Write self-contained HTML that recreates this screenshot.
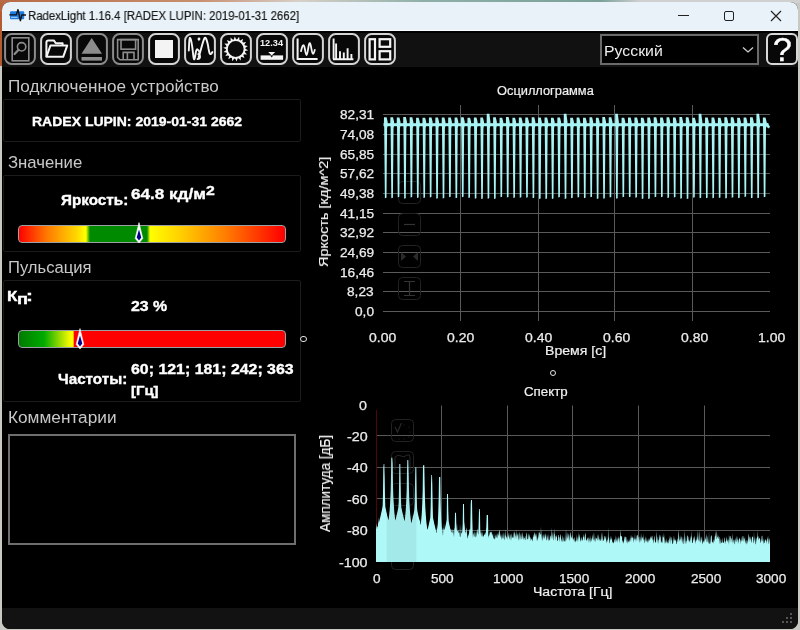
<!DOCTYPE html>
<html><head><meta charset="utf-8"><style>
html,body{margin:0;padding:0;width:800px;height:630px;overflow:hidden;background:#cfcfcf}
.a{position:absolute;box-sizing:border-box}
svg.a{will-change:transform}
.t{position:absolute;white-space:nowrap;font-family:"Liberation Sans", sans-serif;will-change:transform}
#win{position:absolute;left:2px;top:2px;width:796px;height:627px;background:#000;border-radius:8px;overflow:hidden}
#tb{position:absolute;left:0;top:0;width:796px;height:29px;background:#e8f2f8}
.box{border:1px solid #1c1c1c;border-radius:2px}
.bar{border:1.6px solid #9aa0a4;border-radius:4px}
</style></head><body>
<div style="position:absolute;left:0;top:0;width:800px;height:630px;background:#c9c9c4"></div><div style="position:absolute;left:0;top:0;width:2px;height:66px;background:#b45a30"></div><div style="position:absolute;left:0;top:0;width:12px;height:12px;background:#b8643a"></div><div style="position:absolute;left:0;top:0;width:800px;height:3px;background:linear-gradient(90deg,#b86a45 0,#c89070 200px,#d8d0c8 300px,#8fb0a8 420px,#7aa098 600px,#d0d0d0 640px)"></div>
<div id="win">
<div id="tb"></div>
<div class="a" style="left:0;top:28px;width:796px;height:1px;background:#fafdff"></div>
<div class="a" style="left:0;top:31px;width:796px;height:34px;background:#111"></div>
<svg class="a" style="left:7px;top:7px" width="18" height="14" viewBox="0 0 18 14"><rect x="1" y="2.2" width="14.2" height="8" rx="1" fill="#1e7be0"/><path d="M0.3,5.8 H7.4 L9,0.3 L11.4,12 L12.8,6 H17" fill="none" stroke="#111" stroke-width="1.3"/><path d="M2,8.3 H8.5" stroke="#bfe0ff" stroke-width="0.9"/></svg>
<div class="a" style="left:676px;top:13px;width:11px;height:1px;background:#222"></div>
<div class="a" style="left:722px;top:9px;width:10px;height:10px;border:1.3px solid #222;border-radius:2px"></div>
<svg class="a" style="left:768px;top:8px" width="12" height="12" viewBox="0 0 12 12"><path d="M1,1 L11,11 M11,1 L1,11" stroke="#222" stroke-width="1.2"/></svg>
<div class="a" style="left:0;top:606px;width:796px;height:21px;background:#121212"></div>
<svg class="a" style="left:780px;top:611px" width="12" height="12"><g fill="#555"><rect x="8" y="0" width="2" height="2"/><rect x="4" y="4" width="2" height="2"/><rect x="8" y="4" width="2" height="2"/><rect x="0" y="8" width="2" height="2"/><rect x="4" y="8" width="2" height="2"/><rect x="8" y="8" width="2" height="2"/></g></svg>
</div>
<div class="a" style="left:600px;top:34px;width:159px;height:31px;border:2px solid #6a6a6a;background:#000"></div>
<svg class="a" style="left:742px;top:46px" width="12" height="8"><path d="M1,1.5 L6,6 L11,1.5" fill="none" stroke="#cfcfcf" stroke-width="1.3"/></svg>
<div class="a" style="left:766px;top:33px;width:32px;height:32px;border:2px solid #d8d8d8;border-radius:6px;background:#080808"></div>
<svg class="a" style="left:4px;top:33px" width="32" height="32" viewBox="0 0 32 32"><rect x="1.1" y="1.1" width="29.8" height="29.8" rx="6.5" fill="#080808" stroke="#8c8c8c" stroke-width="2.0"/><rect x="8.2" y="4.8" width="16.6" height="23" fill="none" stroke="#8c8c8c" stroke-width="1.6"/><circle cx="17.6" cy="13.8" r="4.2" fill="none" stroke="#8c8c8c" stroke-width="1.6"/><path d="M14.6,16.8 L10.6,21" stroke="#8c8c8c" stroke-width="2.2" stroke-linecap="round"/></svg>
<svg class="a" style="left:40px;top:33px" width="32" height="32" viewBox="0 0 32 32"><rect x="1.1" y="1.1" width="29.8" height="29.8" rx="6.5" fill="#080808" stroke="#d4d4d4" stroke-width="2.0"/><path d="M6.4,23.8 V9.6 Q6.4,7.6 8.4,7.6 H14 L15.8,10.2 H22.6 V12.2" fill="none" stroke="#f4f4f4" stroke-width="2" stroke-linejoin="round"/><path d="M10.4,12.6 H27.2 L23.2,23.8 H6.4 Z" fill="none" stroke="#f4f4f4" stroke-width="2" stroke-linejoin="round"/></svg>
<svg class="a" style="left:76px;top:33px" width="32" height="32" viewBox="0 0 32 32"><rect x="1.1" y="1.1" width="29.8" height="29.8" rx="6.5" fill="#080808" stroke="#8c8c8c" stroke-width="2.0"/><path d="M15.7,4.9 L26,20.8 H5.5 Z" fill="#8c8c8c"/><rect x="5.5" y="24" width="20.5" height="3.6" fill="#8c8c8c"/></svg>
<svg class="a" style="left:112px;top:33px" width="32" height="32" viewBox="0 0 32 32"><rect x="1.1" y="1.1" width="29.8" height="29.8" rx="6.5" fill="#080808" stroke="#8c8c8c" stroke-width="2.0"/><path d="M5.6,6.6 H26.2 V26.8 H8 L5.6,24.4 Z" fill="none" stroke="#8c8c8c" stroke-width="1.6"/><rect x="9" y="6.6" width="14.6" height="9.6" fill="none" stroke="#8c8c8c" stroke-width="1.6"/><path d="M11.2,26.8 V19.4 H22 V26.8 M15.4,19.4 V26.8" fill="none" stroke="#8c8c8c" stroke-width="1.6"/></svg>
<svg class="a" style="left:148px;top:33px" width="32" height="32" viewBox="0 0 32 32"><rect x="1.1" y="1.1" width="29.8" height="29.8" rx="6.5" fill="#080808" stroke="#d4d4d4" stroke-width="2.0"/><rect x="7" y="7" width="18" height="18" fill="#f4f4f4"/></svg>
<svg class="a" style="left:184px;top:33px" width="32" height="32" viewBox="0 0 32 32"><rect x="1.1" y="1.1" width="29.8" height="29.8" rx="6.5" fill="#080808" stroke="#d4d4d4" stroke-width="2.0"/><path d="M4.8,17.5 C5.2,9 5.4,4 6.2,5 C7.2,6 8.4,14 9.2,22 C9.8,28 10.4,27 11,24 C11.8,19 12.4,15.5 13.6,16.5 C15.6,18 16.2,20 14.6,21 C16.8,22 16.6,26 13.6,26 M14.8,6 v0.5" fill="none" stroke="#f4f4f4" stroke-width="1.9" stroke-linecap="round"/><path d="M14.6,24 C16.5,19 18.8,8 20.6,5 C22,3.4 23.8,10 24.6,16 C25.4,21 26.2,23 28.4,19" fill="none" stroke="#f4f4f4" stroke-width="1.9" stroke-linecap="round"/><circle cx="15" cy="6" r="1.4" fill="#f4f4f4"/></svg>
<svg class="a" style="left:220px;top:33px" width="32" height="32" viewBox="0 0 32 32"><rect x="1.1" y="1.1" width="29.8" height="29.8" rx="6.5" fill="#080808" stroke="#d4d4d4" stroke-width="2.0"/><path d="M24.68,15.41 L28.24,17.26 L24.38,18.36 Z M24.34,18.52 L27.05,21.47 L23.05,21.19 Z M22.96,21.32 L24.50,25.02 L20.83,23.39 Z M20.70,23.48 L20.88,27.49 L17.99,24.70 Z M17.84,24.74 L16.64,28.57 L14.88,24.96 Z M14.72,24.95 L12.28,28.13 L11.86,24.14 Z M11.72,24.07 L8.34,26.23 L9.31,22.34 Z M9.20,22.23 L5.29,23.10 L7.53,19.77 Z M7.46,19.63 L3.49,19.11 L6.73,16.75 Z M6.72,16.59 L3.16,14.74 L7.02,13.64 Z M7.06,13.48 L4.35,10.53 L8.35,10.81 Z M8.44,10.68 L6.90,6.98 L10.57,8.61 Z M10.70,8.52 L10.52,4.51 L13.41,7.30 Z M13.56,7.26 L14.76,3.43 L16.52,7.04 Z M16.68,7.05 L19.12,3.87 L19.54,7.86 Z M19.68,7.93 L23.06,5.77 L22.09,9.66 Z M22.20,9.77 L26.11,8.90 L23.87,12.23 Z M23.94,12.37 L27.91,12.89 L24.67,15.25 Z" fill="#f4f4f4"/><circle cx="15.7" cy="16" r="8.9" fill="#0b0b0b" stroke="#f4f4f4" stroke-width="1.9"/></svg>
<svg class="a" style="left:256px;top:33px" width="32" height="32" viewBox="0 0 32 32"><rect x="1.1" y="1.1" width="29.8" height="29.8" rx="6.5" fill="#080808" stroke="#d4d4d4" stroke-width="2.0"/><text x="15.5" y="12.9" text-anchor="middle" font-family='"Liberation Sans", sans-serif' font-weight="bold" font-size="9.6" fill="#f4f4f4" textLength="23" lengthAdjust="spacingAndGlyphs">12.34</text><path d="M12.2,18.9 H19.2 L15.7,22.4 Z" fill="#f4f4f4"/><rect x="4.6" y="22.4" width="22.5" height="4.4" fill="#f4f4f4"/><path d="M14.2,22.4 H17.2 L15.7,24.6 Z" fill="#0b0b0b"/></svg>
<svg class="a" style="left:292px;top:33px" width="32" height="32" viewBox="0 0 32 32"><rect x="1.1" y="1.1" width="29.8" height="29.8" rx="6.5" fill="#080808" stroke="#d4d4d4" stroke-width="2.0"/><path d="M5.6,5.6 V26 H25.6" fill="none" stroke="#f4f4f4" stroke-width="2"/><path d="M9,18.2 C10,14 10.8,11.6 11.8,12.4 C13,13.6 13.4,22 14.6,22 C15.8,22 16.4,9.6 17.8,10.2 C19.2,10.8 19.6,20.8 21,20.8 C22,20.8 22.4,18 22.8,16.8" fill="none" stroke="#f4f4f4" stroke-width="1.8" stroke-linecap="round"/></svg>
<svg class="a" style="left:328px;top:33px" width="32" height="32" viewBox="0 0 32 32"><rect x="1.1" y="1.1" width="29.8" height="29.8" rx="6.5" fill="#080808" stroke="#d4d4d4" stroke-width="2.0"/><path d="M5.6,5.4 V26.2 M8.1,10.6 V26.2 M12,18.2 V26.2 M15.8,19.4 V26.2 M19.6,15.2 V26.2 M23.4,21 V26.2 M5,26.2 H25.4" fill="none" stroke="#f4f4f4" stroke-width="1.9"/></svg>
<svg class="a" style="left:364px;top:33px" width="32" height="32" viewBox="0 0 32 32"><rect x="1.1" y="1.1" width="29.8" height="29.8" rx="6.5" fill="#080808" stroke="#d4d4d4" stroke-width="2.0"/><rect x="5.6" y="6.2" width="5.4" height="20.2" fill="none" stroke="#f4f4f4" stroke-width="2.2"/><rect x="15.6" y="6.2" width="10.6" height="7.6" fill="none" stroke="#f4f4f4" stroke-width="2.2"/><rect x="15.6" y="18.2" width="10.6" height="8.2" fill="none" stroke="#f4f4f4" stroke-width="2.2"/></svg>
<div class="t" style="left:603.93px;top:43.00px;font-size:15.26px;line-height:15.26px;color:#eeeeee;font-weight:normal;transform-origin:0 0;transform:scaleX(1.0381);">Русский</div>
<div class="t" style="left:772.85px;top:33.00px;font-size:33.72px;line-height:33.72px;color:#ffffff;font-weight:normal;transform-origin:0 0;transform:scaleX(1.0009);-webkit-text-stroke:0.4px #fff;">?</div>
<div class="t" style="left:27.89px;top:9.00px;font-size:13.37px;line-height:13.37px;color:#1a1a1a;font-weight:normal;transform-origin:0 0;transform:scaleX(0.8530);-webkit-text-stroke:0.2px #1a1a1a;">RadexLight 1.16.4 [RADEX LUPIN: 2019-01-31 2662]</div>
<div class="t" style="left:7.63px;top:78.00px;font-size:16.28px;line-height:16.28px;color:#c8c8c8;font-weight:normal;transform-origin:0 0;transform:scaleX(1.0523);">Подключенное устройство</div>
<div class="a box" style="left:3px;top:99px;width:298px;height:43px"></div>
<div class="t" style="left:32.09px;top:115.00px;font-size:13.66px;line-height:13.66px;color:#fff;font-weight:bold;transform-origin:0 0;transform:scaleX(1.0248);-webkit-text-stroke:0.35px #fff;">RADEX LUPIN: 2019-01-31 2662</div>
<div class="t" style="left:8.25px;top:155.00px;font-size:15.99px;line-height:15.99px;color:#c8c8c8;font-weight:normal;transform-origin:0 0;transform:scaleX(1.0482);">Значение</div>
<div class="a box" style="left:3px;top:175px;width:298px;height:77px"></div>
<div class="t" style="left:60.57px;top:194.00px;font-size:13.95px;line-height:13.95px;color:#fff;font-weight:bold;transform-origin:0 0;transform:scaleX(1.0950);-webkit-text-stroke:0.35px #fff;">Яркость:</div>
<div class="t" style="left:131.30px;top:187.00px;font-size:14.68px;line-height:14.68px;color:#fff;font-weight:bold;transform-origin:0 0;transform:scaleX(1.1662);-webkit-text-stroke:0.35px #fff;">64.8 кд/м</div>
<div class="t" style="left:205.78px;top:185.00px;font-size:12.94px;line-height:12.94px;color:#fff;font-weight:bold;transform-origin:0 0;transform:scaleX(1.2227);-webkit-text-stroke:0.35px #fff;">2</div>
<div class="a bar" style="left:18px;top:225px;width:268px;height:18px;background:linear-gradient(90deg,#ff0000 0px,#ff7a00 28px,#ffd800 58px,#ffff00 66px,#ffff00 67px,#008a00 71px,#008a00 128px,#ffff00 131px,#ffd200 160px,#ff8000 205px,#ff0000 265px)"></div>
<svg class="a" style="left:133.3px;top:222px" width="12" height="22" viewBox="0 0 12 22"><path d="M6,0.6 L9.8,16.4 L6,20.9 L2.2,16.4 Z" fill="#fff" stroke="#fff" stroke-width="0.6" stroke-linejoin="round"/><path d="M6,7.6 L8.3,15.6 L6,18.6 L3.7,15.6 Z" fill="#00008a"/></svg>
<div class="t" style="left:8.07px;top:259.00px;font-size:16.13px;line-height:16.13px;color:#c8c8c8;font-weight:normal;transform-origin:0 0;transform:scaleX(1.0303);">Пульсация</div>
<div class="a box" style="left:3px;top:280px;width:298px;height:122px"></div>
<div class="t" style="left:7.14px;top:289.00px;font-size:14.68px;line-height:14.68px;color:#fff;font-weight:bold;transform-origin:0 0;transform:scaleX(1.1580);-webkit-text-stroke:0.35px #fff;">К</div>
<div class="t" style="left:16.81px;top:292.00px;font-size:14.39px;line-height:14.39px;color:#fff;font-weight:bold;transform-origin:0 0;transform:scaleX(1.2716);-webkit-text-stroke:0.35px #fff;">п</div>
<div class="t" style="left:26.13px;top:289.00px;font-size:14.39px;line-height:14.39px;color:#fff;font-weight:bold;transform-origin:0 0;transform:scaleX(1.4378);-webkit-text-stroke:0.35px #fff;">:</div>
<div class="t" style="left:131.12px;top:299.00px;font-size:14.53px;line-height:14.53px;color:#fff;font-weight:bold;transform-origin:0 0;transform:scaleX(1.0946);-webkit-text-stroke:0.35px #fff;">23 %</div>
<div class="a bar" style="left:18px;top:330px;width:268px;height:18px;background:linear-gradient(90deg,#007a00 0px,#00aa00 25px,#90d800 40px,#ffff00 52px,#ffff00 54px,#ff0000 55.5px,#ff0000 267px)"></div>
<svg class="a" style="left:73.6px;top:327.5px" width="12" height="22" viewBox="0 0 12 22"><path d="M6,0.6 L9.8,16.4 L6,20.9 L2.2,16.4 Z" fill="#fff" stroke="#fff" stroke-width="0.6" stroke-linejoin="round"/><path d="M6,7.6 L8.3,15.6 L6,18.6 L3.7,15.6 Z" fill="#00008a"/></svg>
<div class="a" style="left:300.4px;top:336.3px;width:6.2px;height:6.2px;border:1.4px solid #e4e4e4;border-radius:50%"></div>
<div class="t" style="left:58.14px;top:372.00px;font-size:14.53px;line-height:14.53px;color:#fff;font-weight:bold;transform-origin:0 0;transform:scaleX(1.0468);-webkit-text-stroke:0.35px #fff;">Частоты:</div>
<div class="t" style="left:130.69px;top:362.00px;font-size:14.24px;line-height:14.24px;color:#fff;font-weight:bold;transform-origin:0 0;transform:scaleX(1.1170);-webkit-text-stroke:0.35px #fff;">60; 121; 181; 242; 363</div>
<div class="t" style="left:131.18px;top:384.00px;font-size:13.66px;line-height:13.66px;color:#fff;font-weight:bold;transform-origin:0 0;transform:scaleX(1.0937);-webkit-text-stroke:0.35px #fff;">[Гц]</div>
<div class="t" style="left:7.52px;top:409.00px;font-size:16.42px;line-height:16.42px;color:#c8c8c8;font-weight:normal;transform-origin:0 0;transform:scaleX(1.0504);">Комментарии</div>
<div class="a" style="left:8px;top:434px;width:288px;height:111px;border:2px solid #6e6e6e"></div>
<div class="t" style="left:339.95px;top:109.00px;font-size:12.35px;line-height:12.35px;color:#ececec;font-weight:normal;transform-origin:0 0;transform:scaleX(1.1060);-webkit-text-stroke:0.25px #ececec">82,31</div>
<div class="t" style="left:339.89px;top:129.00px;font-size:12.35px;line-height:12.35px;color:#ececec;font-weight:normal;transform-origin:0 0;transform:scaleX(1.1060);-webkit-text-stroke:0.25px #ececec">74,08</div>
<div class="t" style="left:339.89px;top:149.00px;font-size:12.35px;line-height:12.35px;color:#ececec;font-weight:normal;transform-origin:0 0;transform:scaleX(1.1060);-webkit-text-stroke:0.25px #ececec">65,85</div>
<div class="t" style="left:339.95px;top:168.00px;font-size:12.35px;line-height:12.35px;color:#ececec;font-weight:normal;transform-origin:0 0;transform:scaleX(1.1060);-webkit-text-stroke:0.25px #ececec">57,62</div>
<div class="t" style="left:339.89px;top:188.00px;font-size:12.35px;line-height:12.35px;color:#ececec;font-weight:normal;transform-origin:0 0;transform:scaleX(1.1060);-webkit-text-stroke:0.25px #ececec">49,38</div>
<div class="t" style="left:339.89px;top:208.00px;font-size:12.35px;line-height:12.35px;color:#ececec;font-weight:normal;transform-origin:0 0;transform:scaleX(1.1060);-webkit-text-stroke:0.25px #ececec">41,15</div>
<div class="t" style="left:339.95px;top:227.00px;font-size:12.35px;line-height:12.35px;color:#ececec;font-weight:normal;transform-origin:0 0;transform:scaleX(1.1060);-webkit-text-stroke:0.25px #ececec">32,92</div>
<div class="t" style="left:339.95px;top:247.00px;font-size:12.35px;line-height:12.35px;color:#ececec;font-weight:normal;transform-origin:0 0;transform:scaleX(1.1060);-webkit-text-stroke:0.25px #ececec">24,69</div>
<div class="t" style="left:339.89px;top:267.00px;font-size:12.35px;line-height:12.35px;color:#ececec;font-weight:normal;transform-origin:0 0;transform:scaleX(1.1060);-webkit-text-stroke:0.25px #ececec">16,46</div>
<div class="t" style="left:347.47px;top:286.00px;font-size:12.35px;line-height:12.35px;color:#ececec;font-weight:normal;transform-origin:0 0;transform:scaleX(1.1060);-webkit-text-stroke:0.25px #ececec">8,23</div>
<div class="t" style="left:354.98px;top:306.00px;font-size:12.35px;line-height:12.35px;color:#ececec;font-weight:normal;transform-origin:0 0;transform:scaleX(1.1060);-webkit-text-stroke:0.25px #ececec">0,0</div>
<div class="t" style="left:369.21px;top:332.00px;font-size:12.06px;line-height:12.06px;color:#ececec;font-weight:normal;transform-origin:0 0;transform:scaleX(1.1583);-webkit-text-stroke:0.25px #ececec">0.00</div>
<div class="t" style="left:447.05px;top:332.00px;font-size:12.06px;line-height:12.06px;color:#ececec;font-weight:normal;transform-origin:0 0;transform:scaleX(1.1583);-webkit-text-stroke:0.25px #ececec">0.20</div>
<div class="t" style="left:524.89px;top:332.00px;font-size:12.06px;line-height:12.06px;color:#ececec;font-weight:normal;transform-origin:0 0;transform:scaleX(1.1583);-webkit-text-stroke:0.25px #ececec">0.40</div>
<div class="t" style="left:602.73px;top:332.00px;font-size:12.06px;line-height:12.06px;color:#ececec;font-weight:normal;transform-origin:0 0;transform:scaleX(1.1583);-webkit-text-stroke:0.25px #ececec">0.60</div>
<div class="t" style="left:680.57px;top:332.00px;font-size:12.06px;line-height:12.06px;color:#ececec;font-weight:normal;transform-origin:0 0;transform:scaleX(1.1583);-webkit-text-stroke:0.25px #ececec">0.80</div>
<div class="t" style="left:758.13px;top:332.00px;font-size:12.06px;line-height:12.06px;color:#ececec;font-weight:normal;transform-origin:0 0;transform:scaleX(1.1583);-webkit-text-stroke:0.25px #ececec">1.00</div>
<div class="t" style="left:496.92px;top:85.00px;font-size:12.50px;line-height:12.50px;color:#f0f0f0;font-weight:normal;transform-origin:0 0;transform:scaleX(1.0253);-webkit-text-stroke:0.2px #f0f0f0;">Осциллограмма</div>
<div class="t" style="left:545.27px;top:345.00px;font-size:12.65px;line-height:12.65px;color:#f0f0f0;font-weight:normal;transform-origin:0 0;transform:scaleX(1.1141);-webkit-text-stroke:0.2px #f0f0f0;">Время [с]</div>
<div class="a" style="left:549.8px;top:369.8px;width:6.2px;height:6.2px;border:1.4px solid #e4e4e4;border-radius:50%"></div>
<div class="t" style="left:316.90px;top:266.85px;font-size:13.23px;line-height:13.23px;color:#f0f0f0;transform-origin:0 0;-webkit-text-stroke:0.2px #f0f0f0;transform:rotate(-90deg) scaleX(1.0955)">Яркость [кд/м^2]</div>
<div class="t" style="left:319.31px;top:531.90px;font-size:13.81px;line-height:13.81px;color:#f0f0f0;transform-origin:0 0;-webkit-text-stroke:0.2px #f0f0f0;transform:rotate(-90deg) scaleX(0.9785)">Амплитуда [дБ]</div>
<div class="t" style="left:359.30px;top:400.00px;font-size:12.50px;line-height:12.50px;color:#ececec;font-weight:normal;transform-origin:0 0;transform:scaleX(1.1387);-webkit-text-stroke:0.25px #ececec">0</div>
<div class="t" style="left:346.63px;top:431.00px;font-size:12.50px;line-height:12.50px;color:#ececec;font-weight:normal;transform-origin:0 0;transform:scaleX(1.1387);-webkit-text-stroke:0.25px #ececec">-20</div>
<div class="t" style="left:346.63px;top:462.00px;font-size:12.50px;line-height:12.50px;color:#ececec;font-weight:normal;transform-origin:0 0;transform:scaleX(1.1387);-webkit-text-stroke:0.25px #ececec">-40</div>
<div class="t" style="left:346.63px;top:494.00px;font-size:12.50px;line-height:12.50px;color:#ececec;font-weight:normal;transform-origin:0 0;transform:scaleX(1.1387);-webkit-text-stroke:0.25px #ececec">-60</div>
<div class="t" style="left:346.63px;top:525.00px;font-size:12.50px;line-height:12.50px;color:#ececec;font-weight:normal;transform-origin:0 0;transform:scaleX(1.1387);-webkit-text-stroke:0.25px #ececec">-80</div>
<div class="t" style="left:338.73px;top:557.00px;font-size:12.50px;line-height:12.50px;color:#ececec;font-weight:normal;transform-origin:0 0;transform:scaleX(1.1387);-webkit-text-stroke:0.25px #ececec">-100</div>
<div class="t" style="left:373.03px;top:573.00px;font-size:12.50px;line-height:12.50px;color:#ececec;font-weight:normal;transform-origin:0 0;transform:scaleX(1.0875);-webkit-text-stroke:0.25px #ececec">0</div>
<div class="t" style="left:431.25px;top:573.00px;font-size:12.50px;line-height:12.50px;color:#ececec;font-weight:normal;transform-origin:0 0;transform:scaleX(1.0875);-webkit-text-stroke:0.25px #ececec">500</div>
<div class="t" style="left:493.01px;top:573.00px;font-size:12.50px;line-height:12.50px;color:#ececec;font-weight:normal;transform-origin:0 0;transform:scaleX(1.0875);-webkit-text-stroke:0.25px #ececec">1000</div>
<div class="t" style="left:558.81px;top:573.00px;font-size:12.50px;line-height:12.50px;color:#ececec;font-weight:normal;transform-origin:0 0;transform:scaleX(1.0875);-webkit-text-stroke:0.25px #ececec">1500</div>
<div class="t" style="left:624.78px;top:573.00px;font-size:12.50px;line-height:12.50px;color:#ececec;font-weight:normal;transform-origin:0 0;transform:scaleX(1.0875);-webkit-text-stroke:0.25px #ececec">2000</div>
<div class="t" style="left:690.58px;top:573.00px;font-size:12.50px;line-height:12.50px;color:#ececec;font-weight:normal;transform-origin:0 0;transform:scaleX(1.0875);-webkit-text-stroke:0.25px #ececec">2500</div>
<div class="t" style="left:756.48px;top:573.00px;font-size:12.50px;line-height:12.50px;color:#ececec;font-weight:normal;transform-origin:0 0;transform:scaleX(1.0875);-webkit-text-stroke:0.25px #ececec">3000</div>
<div class="t" style="left:523.83px;top:386.00px;font-size:12.06px;line-height:12.06px;color:#f0f0f0;font-weight:normal;transform-origin:0 0;transform:scaleX(1.1044);-webkit-text-stroke:0.2px #f0f0f0;">Спектр</div>
<div class="t" style="left:532.70px;top:586.00px;font-size:12.50px;line-height:12.50px;color:#f0f0f0;font-weight:normal;transform-origin:0 0;transform:scaleX(1.1252);-webkit-text-stroke:0.2px #f0f0f0;">Частота [Гц]</div>
<svg class="a" style="left:0;top:0" width="800" height="630"><line x1="383" y1="114.5" x2="770" y2="114.5" stroke="#5a5a5a" stroke-width="1"/><line x1="383" y1="134.5" x2="770" y2="134.5" stroke="#5a5a5a" stroke-width="1"/><line x1="383" y1="154.5" x2="770" y2="154.5" stroke="#5a5a5a" stroke-width="1"/><line x1="383" y1="173.5" x2="770" y2="173.5" stroke="#5a5a5a" stroke-width="1"/><line x1="383" y1="193.5" x2="770" y2="193.5" stroke="#5a5a5a" stroke-width="1"/><line x1="383" y1="213.5" x2="770" y2="213.5" stroke="#5a5a5a" stroke-width="1"/><line x1="383" y1="232.5" x2="770" y2="232.5" stroke="#5a5a5a" stroke-width="1"/><line x1="383" y1="252.5" x2="770" y2="252.5" stroke="#5a5a5a" stroke-width="1"/><line x1="383" y1="272.5" x2="770" y2="272.5" stroke="#5a5a5a" stroke-width="1"/><line x1="383" y1="291.5" x2="770" y2="291.5" stroke="#5a5a5a" stroke-width="1"/><line x1="383" y1="311.5" x2="770" y2="311.5" stroke="#5a5a5a" stroke-width="1"/><line x1="460.5" y1="105" x2="460.5" y2="321" stroke="#5a5a5a" stroke-width="1"/><line x1="538.5" y1="105" x2="538.5" y2="321" stroke="#5a5a5a" stroke-width="1"/><line x1="614.5" y1="105" x2="614.5" y2="321" stroke="#5a5a5a" stroke-width="1"/><line x1="692.5" y1="105" x2="692.5" y2="321" stroke="#5a5a5a" stroke-width="1"/><rect x="398.5" y="181.5" width="22" height="22" rx="4" fill="none" stroke="#222" stroke-width="1"/><rect x="398.5" y="213.5" width="22" height="22" rx="4" fill="none" stroke="#222" stroke-width="1"/><line x1="404" y1="224.5" x2="415" y2="224.5" stroke="#333" stroke-width="1.2"/><rect x="398.5" y="245.5" width="22" height="22" rx="4" fill="none" stroke="#222" stroke-width="1"/><path d="M401,252 L406,256.5 L401,261 Z M418,252 L413,256.5 L418,261 Z" fill="#2a2a2a"/><rect x="398.5" y="277.5" width="22" height="22" rx="4" fill="none" stroke="#222" stroke-width="1"/><path d="M404,281.5 H415 M409.5,281.5 V295.5 M404,295.5 H415" stroke="#333" stroke-width="1.2" fill="none"/><path d="M384.20,128 L383.90,123 L384.00,117.19 L386.60,117.19 L387.70,122 L387.60,126 L387.10,128 L386.50,197.69 L384.90,198.19 Z M390.62,128 L390.32,123 L390.42,117.30 L393.02,117.30 L394.12,122 L394.02,126 L393.52,128 L392.92,197.81 L391.32,198.31 Z M397.04,128 L396.74,123 L396.84,117.50 L399.44,117.50 L400.54,122 L400.44,126 L399.94,128 L399.34,196.73 L397.74,197.23 Z M403.47,128 L403.17,123 L403.27,117.01 L405.87,117.01 L406.97,122 L406.87,126 L406.37,128 L405.77,198.27 L404.17,198.77 Z M409.89,128 L409.59,123 L409.69,117.21 L412.29,117.21 L413.39,122 L413.29,126 L412.79,128 L412.19,197.07 L410.59,197.57 Z M416.31,128 L416.01,123 L416.11,117.80 L418.71,117.80 L419.81,122 L419.71,126 L419.21,128 L418.61,197.54 L417.01,198.04 Z M422.73,128 L422.43,123 L422.53,117.67 L425.13,117.67 L426.23,122 L426.13,126 L425.63,128 L425.03,197.55 L423.43,198.05 Z M429.15,128 L428.85,123 L428.95,117.51 L431.55,117.51 L432.65,122 L432.55,126 L432.05,128 L431.45,196.90 L429.85,197.40 Z M435.58,128 L435.28,123 L435.38,117.51 L437.98,117.51 L439.08,122 L438.98,126 L438.48,128 L437.88,198.34 L436.28,198.84 Z M442.00,128 L441.70,123 L441.80,117.42 L444.40,117.42 L445.50,122 L445.40,126 L444.90,128 L444.30,198.08 L442.70,198.58 Z M448.42,128 L448.12,123 L448.22,117.54 L450.82,117.54 L451.92,122 L451.82,126 L451.32,128 L450.72,196.73 L449.12,197.23 Z M454.84,128 L454.54,123 L454.64,117.61 L457.24,117.61 L458.34,122 L458.24,126 L457.74,128 L457.14,197.78 L455.54,198.28 Z M461.26,128 L460.96,123 L461.06,117.24 L463.66,117.24 L464.76,122 L464.66,126 L464.16,128 L463.56,196.66 L461.96,197.16 Z M467.69,128 L467.39,123 L467.49,117.69 L470.09,117.69 L471.19,122 L471.09,126 L470.59,128 L469.99,197.55 L468.39,198.05 Z M474.11,128 L473.81,123 L473.91,117.58 L476.51,117.58 L477.61,122 L477.51,126 L477.01,128 L476.41,198.36 L474.81,198.86 Z M480.53,128 L480.23,123 L480.33,117.57 L482.93,117.57 L484.03,122 L483.93,126 L483.43,128 L482.83,198.44 L481.23,198.94 Z M486.95,128 L486.65,123 L486.75,113.80 L489.35,113.80 L490.45,122 L490.35,126 L489.85,128 L489.25,198.20 L487.65,198.70 Z M493.37,128 L493.07,123 L493.17,117.36 L495.77,117.36 L496.87,122 L496.77,126 L496.27,128 L495.67,198.47 L494.07,198.97 Z M499.80,128 L499.50,123 L499.60,117.70 L502.20,117.70 L503.30,122 L503.20,126 L502.70,128 L502.10,196.79 L500.50,197.29 Z M506.22,128 L505.92,123 L506.02,117.11 L508.62,117.11 L509.72,122 L509.62,126 L509.12,128 L508.52,197.03 L506.92,197.53 Z M512.64,128 L512.34,123 L512.44,117.77 L515.04,117.77 L516.14,122 L516.04,126 L515.54,128 L514.94,197.47 L513.34,197.97 Z M519.06,128 L518.76,123 L518.86,117.50 L521.46,117.50 L522.56,122 L522.46,126 L521.96,128 L521.36,197.20 L519.76,197.70 Z M525.48,128 L525.18,123 L525.28,117.41 L527.88,117.41 L528.98,122 L528.88,126 L528.38,128 L527.78,197.37 L526.18,197.87 Z M531.91,128 L531.61,123 L531.71,117.28 L534.31,117.28 L535.41,122 L535.31,126 L534.81,128 L534.21,197.77 L532.61,198.27 Z M538.33,128 L538.03,123 L538.13,117.47 L540.73,117.47 L541.83,122 L541.73,126 L541.23,128 L540.63,198.41 L539.03,198.91 Z M544.75,128 L544.45,123 L544.55,117.55 L547.15,117.55 L548.25,122 L548.15,126 L547.65,128 L547.05,198.46 L545.45,198.96 Z M551.17,128 L550.87,123 L550.97,117.69 L553.57,117.69 L554.67,122 L554.57,126 L554.07,128 L553.47,198.58 L551.87,199.08 Z M557.59,128 L557.29,123 L557.39,117.54 L559.99,117.54 L561.09,122 L560.99,126 L560.49,128 L559.89,196.93 L558.29,197.43 Z M564.02,128 L563.72,123 L563.82,113.80 L566.42,113.80 L567.52,122 L567.42,126 L566.92,128 L566.32,198.53 L564.72,199.03 Z M570.44,128 L570.14,123 L570.24,117.72 L572.84,117.72 L573.94,122 L573.84,126 L573.34,128 L572.74,197.74 L571.14,198.24 Z M576.86,128 L576.56,123 L576.66,117.57 L579.26,117.57 L580.36,122 L580.26,126 L579.76,128 L579.16,197.02 L577.56,197.52 Z M583.28,128 L582.98,123 L583.08,117.67 L585.68,117.67 L586.78,122 L586.68,126 L586.18,128 L585.58,197.75 L583.98,198.25 Z M589.71,128 L589.41,123 L589.51,117.23 L592.11,117.23 L593.21,122 L593.11,126 L592.61,128 L592.01,196.73 L590.41,197.23 Z M596.13,128 L595.83,123 L595.93,117.68 L598.53,117.68 L599.63,122 L599.53,126 L599.03,128 L598.43,198.58 L596.83,199.08 Z M602.55,128 L602.25,123 L602.35,117.07 L604.95,117.07 L606.05,122 L605.95,126 L605.45,128 L604.85,198.20 L603.25,198.70 Z M608.97,128 L608.67,123 L608.77,117.33 L611.37,117.33 L612.47,122 L612.37,126 L611.87,128 L611.27,196.90 L609.67,197.40 Z M615.39,128 L615.09,123 L615.19,113.80 L617.79,113.80 L618.89,122 L618.79,126 L618.29,128 L617.69,198.14 L616.09,198.64 Z M621.82,128 L621.52,123 L621.62,117.70 L624.22,117.70 L625.32,122 L625.22,126 L624.72,128 L624.12,196.69 L622.52,197.19 Z M628.24,128 L627.94,123 L628.04,117.49 L630.64,117.49 L631.74,122 L631.64,126 L631.14,128 L630.54,196.69 L628.94,197.19 Z M634.66,128 L634.36,123 L634.46,117.57 L637.06,117.57 L638.16,122 L638.06,126 L637.56,128 L636.96,197.26 L635.36,197.76 Z M641.08,128 L640.78,123 L640.88,117.70 L643.48,117.70 L644.58,122 L644.48,126 L643.98,128 L643.38,198.56 L641.78,199.06 Z M647.50,128 L647.20,123 L647.30,117.40 L649.90,117.40 L651.00,122 L650.90,126 L650.40,128 L649.80,198.60 L648.20,199.10 Z M653.93,128 L653.63,123 L653.73,117.25 L656.33,117.25 L657.43,122 L657.33,126 L656.83,128 L656.23,196.75 L654.63,197.25 Z M660.35,128 L660.05,123 L660.15,117.48 L662.75,117.48 L663.85,122 L663.75,126 L663.25,128 L662.65,196.66 L661.05,197.16 Z M666.77,128 L666.47,123 L666.57,117.16 L669.17,117.16 L670.27,122 L670.17,126 L669.67,128 L669.07,197.42 L667.47,197.92 Z M673.19,128 L672.89,123 L672.99,117.49 L675.59,117.49 L676.69,122 L676.59,126 L676.09,128 L675.49,196.91 L673.89,197.41 Z M679.61,128 L679.31,123 L679.41,117.03 L682.01,117.03 L683.11,122 L683.01,126 L682.51,128 L681.91,198.34 L680.31,198.84 Z M686.04,128 L685.74,123 L685.84,117.25 L688.44,117.25 L689.54,122 L689.44,126 L688.94,128 L688.34,198.52 L686.74,199.02 Z M692.46,128 L692.16,123 L692.26,117.72 L694.86,117.72 L695.96,122 L695.86,126 L695.36,128 L694.76,197.36 L693.16,197.86 Z M698.88,128 L698.58,123 L698.68,113.80 L701.28,113.80 L702.38,122 L702.28,126 L701.78,128 L701.18,197.64 L699.58,198.14 Z M705.30,128 L705.00,123 L705.10,117.52 L707.70,117.52 L708.80,122 L708.70,126 L708.20,128 L707.60,197.79 L706.00,198.29 Z M711.72,128 L711.42,123 L711.52,117.45 L714.12,117.45 L715.22,122 L715.12,126 L714.62,128 L714.02,197.84 L712.42,198.34 Z M718.15,128 L717.85,123 L717.95,117.75 L720.55,117.75 L721.65,122 L721.55,126 L721.05,128 L720.45,197.61 L718.85,198.11 Z M724.57,128 L724.27,123 L724.37,117.34 L726.97,117.34 L728.07,122 L727.97,126 L727.47,128 L726.87,198.04 L725.27,198.54 Z M730.99,128 L730.69,123 L730.79,117.19 L733.39,117.19 L734.49,122 L734.39,126 L733.89,128 L733.29,197.20 L731.69,197.70 Z M737.41,128 L737.11,123 L737.21,117.78 L739.81,117.78 L740.91,122 L740.81,126 L740.31,128 L739.71,197.64 L738.11,198.14 Z M743.83,128 L743.53,123 L743.63,117.44 L746.23,117.44 L747.33,122 L747.23,126 L746.73,128 L746.13,196.62 L744.53,197.12 Z M750.26,128 L749.96,123 L750.06,117.33 L752.66,117.33 L753.76,122 L753.66,126 L753.16,128 L752.56,197.76 L750.96,198.26 Z M756.68,128 L756.38,123 L756.48,113.80 L759.08,113.80 L760.18,122 L760.08,126 L759.58,128 L758.98,197.83 L757.38,198.33 Z M763.10,128 L762.80,123 L762.90,117.51 L765.50,117.51 L766.60,122 L766.50,126 L766.00,128 L765.40,196.72 L763.80,197.22 Z" fill="#a8f4f4"/><rect x="383.5" y="123.2" width="385" height="3" fill="#a8f4f4"/><path d="M766.5,122 L770,126.5 L769,128.5 L766.5,127 Z" fill="#a8f4f4"/><line x1="376" y1="435.5" x2="770" y2="435.5" stroke="#5a5a5a" stroke-width="1"/><line x1="376" y1="467.5" x2="770" y2="467.5" stroke="#5a5a5a" stroke-width="1"/><line x1="376" y1="498.5" x2="770" y2="498.5" stroke="#5a5a5a" stroke-width="1"/><line x1="376" y1="530.5" x2="770" y2="530.5" stroke="#5a5a5a" stroke-width="1"/><line x1="441.5" y1="405.5" x2="441.5" y2="562" stroke="#5a5a5a" stroke-width="1"/><line x1="507.5" y1="405.5" x2="507.5" y2="562" stroke="#5a5a5a" stroke-width="1"/><line x1="572.5" y1="405.5" x2="572.5" y2="562" stroke="#5a5a5a" stroke-width="1"/><line x1="638.5" y1="405.5" x2="638.5" y2="562" stroke="#5a5a5a" stroke-width="1"/><line x1="704.5" y1="405.5" x2="704.5" y2="562" stroke="#5a5a5a" stroke-width="1"/><line x1="376.5" y1="410" x2="376.5" y2="562" stroke="#500606" stroke-width="1"/><rect x="391.5" y="419.5" width="22" height="22" rx="4" fill="none" stroke="#242424" stroke-width="1"/><rect x="391.5" y="451.5" width="22" height="22" rx="4" fill="none" stroke="#242424" stroke-width="1"/><rect x="391.5" y="483.5" width="22" height="22" rx="4" fill="none" stroke="#242424" stroke-width="1"/><rect x="391.5" y="515.5" width="22" height="22" rx="4" fill="none" stroke="#242424" stroke-width="1"/><rect x="391.5" y="547.5" width="22" height="22" rx="4" fill="none" stroke="#242424" stroke-width="1"/><path d="M395,427 L397.5,432 L401.5,423" stroke="#2c2c2c" stroke-width="1.2" fill="none"/><circle cx="404" cy="425" r="0.6" fill="#2a2a2a"/><circle cx="409" cy="427" r="0.6" fill="#2a2a2a"/><circle cx="410" cy="432" r="0.6" fill="#2a2a2a"/><circle cx="409" cy="437" r="0.6" fill="#2a2a2a"/><circle cx="404" cy="439" r="0.6" fill="#2a2a2a"/><circle cx="399" cy="439" r="0.6" fill="#2a2a2a"/><path d="M395,470 V457 Q398,454 401,456 Q404,458 407,455 Q410,454 410,457 V470" stroke="#2a2a2a" stroke-width="1" fill="none"/><path d="M376,562 L376,519 L376.0,527.8 L376.3,523.2 L376.7,527.3 L377.0,529.4 L377.3,526.1 L377.7,527.0 L378.0,525.8 L378.3,517.1 L378.7,523.0 L379.0,522.1 L379.3,520.9 L379.7,519.6 L380.0,518.2 L380.3,516.9 L380.7,515.5 L381.0,514.1 L381.3,512.6 L381.7,511.1 L382.0,509.6 L382.3,507.9 L382.7,505.3 L383.0,492.5 L383.3,467.7 L383.7,464.1 L384.0,464.1 L384.3,464.1 L384.7,477.4 L385.0,496.9 L385.3,506.7 L385.7,508.4 L386.0,510.0 L386.3,511.6 L386.7,513.0 L387.0,514.5 L387.3,515.9 L387.7,517.3 L388.0,518.6 L388.3,519.9 L388.7,519.3 L389.0,516.6 L389.3,513.4 L389.7,509.6 L390.0,505.0 L390.3,499.0 L390.7,490.5 L391.0,475.6 L391.3,457.8 L391.7,457.8 L392.0,457.8 L392.3,457.8 L392.7,463.2 L393.0,485.4 L393.3,495.8 L393.7,502.6 L394.0,507.8 L394.3,511.9 L394.7,515.3 L395.0,518.2 L395.3,520.5 L395.7,519.2 L396.0,517.9 L396.3,516.5 L396.7,515.1 L397.0,513.7 L397.3,512.2 L397.7,510.7 L398.0,509.1 L398.3,507.4 L398.7,502.2 L399.0,487.4 L399.3,464.1 L399.7,464.1 L400.0,464.1 L400.3,464.1 L400.7,484.5 L401.0,500.6 L401.3,507.2 L401.7,508.9 L402.0,510.5 L402.3,512.0 L402.7,513.5 L403.0,514.9 L403.3,516.3 L403.7,517.7 L404.0,519.0 L404.3,520.3 L404.7,520.9 L405.0,518.1 L405.3,514.7 L405.7,510.7 L406.0,505.8 L406.3,499.2 L406.7,489.5 L407.0,470.5 L407.3,460.1 L407.7,460.1 L408.0,460.1 L408.3,460.1 L408.7,474.7 L409.0,491.3 L409.3,500.3 L409.7,506.6 L410.0,511.4 L410.3,515.3 L410.7,518.5 L411.0,521.3 L411.3,523.3 L411.7,521.9 L412.0,520.6 L412.3,519.2 L412.7,517.8 L413.0,516.4 L413.3,514.9 L413.7,513.4 L414.0,511.8 L414.3,510.1 L414.7,501.9 L415.0,484.2 L415.3,467.2 L415.7,467.2 L416.0,467.2 L416.3,467.2 L416.7,493.3 L417.0,507.0 L417.3,510.8 L417.7,512.5 L418.0,514.0 L418.3,515.6 L418.7,517.0 L419.0,518.5 L419.3,519.8 L419.7,521.2 L420.0,518.4 L420.3,523.8 L420.7,525.1 L421.0,522.4 L421.3,518.9 L421.7,514.6 L422.0,509.3 L422.3,502.1 L422.7,490.8 L423.0,465.3 L423.3,465.3 L423.7,465.3 L424.0,465.3 L424.3,465.3 L424.7,486.1 L425.0,499.5 L425.3,507.5 L425.7,513.3 L426.0,517.8 L426.3,521.4 L426.7,524.6 L427.0,527.3 L427.3,529.2 L427.7,529.4 L428.0,528.1 L428.3,526.7 L428.7,525.3 L429.0,523.8 L429.3,522.3 L429.7,520.8 L430.0,519.2 L430.3,517.5 L430.7,505.7 L431.0,483.9 L431.3,475.1 L431.7,475.1 L432.0,475.1 L432.3,484.1 L432.7,505.8 L433.0,517.5 L433.3,519.2 L433.7,520.8 L434.0,522.4 L434.3,523.9 L434.7,525.3 L435.0,526.7 L435.3,528.1 L435.7,529.4 L436.0,530.8 L436.3,532.1 L436.7,533.3 L437.0,523.9 L437.3,529.4 L437.7,524.9 L438.0,519.1 L438.3,511.1 L438.7,497.6 L439.0,477.0 L439.3,477.0 L439.7,477.0 L440.0,477.0 L440.3,477.0 L440.7,502.6 L441.0,513.8 L441.3,521.0 L441.7,526.3 L442.0,530.5 L442.3,527.0 L442.7,533.0 L443.0,535.9 L443.3,527.4 L443.7,530.5 L444.0,522.6 L444.3,529.8 L444.7,529.6 L445.0,528.1 L445.3,526.6 L445.7,525.1 L446.0,523.4 L446.3,521.7 L446.7,519.8 L447.0,494.0 L447.3,494.0 L447.7,494.0 L448.0,494.0 L448.3,511.1 L448.7,520.9 L449.0,522.7 L449.3,524.4 L449.7,526.0 L450.0,527.5 L450.3,529.0 L450.7,529.3 L451.0,531.8 L451.3,532.8 L451.7,529.9 L452.0,528.9 L452.3,530.2 L452.7,533.8 L453.0,529.2 L453.3,530.4 L453.7,533.9 L454.0,537.2 L454.3,529.3 L454.7,527.2 L455.0,512.8 L455.3,512.8 L455.7,512.8 L456.0,512.8 L456.3,523.4 L456.7,531.3 L457.0,522.6 L457.3,530.9 L457.7,531.3 L458.0,531.2 L458.3,529.4 L458.7,533.3 L459.0,532.7 L459.3,532.1 L459.7,537.6 L460.0,522.8 L460.3,536.8 L460.7,536.7 L461.0,524.2 L461.3,534.3 L461.7,532.6 L462.0,532.8 L462.3,531.1 L462.7,524.2 L463.0,503.9 L463.3,503.9 L463.7,503.9 L464.0,503.9 L464.3,527.3 L464.7,521.5 L465.0,533.1 L465.3,529.2 L465.7,533.6 L466.0,531.7 L466.3,529.3 L466.7,526.9 L467.0,534.4 L467.3,538.4 L467.7,537.7 L468.0,532.4 L468.3,536.4 L468.7,534.9 L469.0,533.8 L469.3,529.7 L469.7,528.8 L470.0,531.4 L470.3,527.4 L470.7,505.1 L471.0,499.9 L471.3,499.9 L471.7,499.9 L472.0,499.9 L472.3,517.9 L472.7,532.7 L473.0,538.3 L473.3,532.2 L473.7,534.0 L474.0,535.7 L474.3,537.3 L474.7,532.1 L475.0,531.4 L475.3,533.4 L475.7,537.4 L476.0,537.0 L476.3,535.9 L476.7,529.9 L477.0,534.2 L477.3,530.6 L477.7,528.3 L478.0,533.3 L478.3,534.9 L478.7,522.0 L479.0,508.9 L479.3,508.9 L479.7,508.9 L480.0,512.8 L480.3,535.1 L480.7,529.7 L481.0,534.3 L481.3,530.7 L481.7,535.6 L482.0,537.0 L482.3,536.1 L482.7,531.3 L483.0,536.5 L483.3,536.5 L483.7,536.3 L484.0,534.6 L484.3,534.8 L484.7,534.7 L485.0,532.8 L485.3,532.2 L485.7,534.9 L486.0,530.8 L486.3,527.0 L486.7,514.9 L487.0,514.9 L487.3,514.9 L487.7,514.9 L488.0,514.9 L488.3,538.3 L488.7,535.3 L489.0,536.6 L489.3,531.0 L489.7,535.7 L490.0,533.5 L490.3,531.6 L490.7,532.5 L491.0,532.3 L491.3,532.5 L491.7,531.3 L492.0,535.6 L492.3,532.9 L492.7,536.6 L493.0,533.5 L493.3,537.1 L493.7,538.8 L494.0,538.0 L494.3,539.5 L494.7,539.0 L495.0,532.5 L495.3,539.5 L495.7,534.4 L496.0,536.9 L496.3,538.0 L496.7,533.2 L497.0,538.0 L497.3,537.5 L497.7,532.8 L498.0,534.9 L498.3,535.6 L498.7,531.6 L499.0,537.0 L499.3,531.0 L499.7,529.9 L500.0,532.5 L500.3,535.2 L500.7,537.7 L501.0,534.0 L501.3,540.3 L501.7,536.8 L502.0,533.5 L502.3,538.9 L502.7,537.3 L503.0,532.0 L503.3,534.3 L503.7,537.9 L504.0,539.1 L504.3,540.5 L504.7,532.3 L505.0,539.8 L505.3,528.6 L505.7,536.0 L506.0,534.9 L506.3,537.7 L506.7,536.6 L507.0,539.8 L507.3,538.7 L507.7,535.6 L508.0,532.6 L508.3,534.0 L508.7,536.2 L509.0,537.3 L509.3,539.8 L509.7,536.3 L510.0,532.7 L510.3,540.7 L510.7,533.9 L511.0,535.4 L511.3,540.8 L511.7,533.1 L512.0,534.9 L512.3,537.3 L512.7,538.0 L513.0,537.1 L513.3,538.5 L513.7,533.8 L514.0,531.8 L514.3,534.0 L514.7,530.4 L515.0,540.1 L515.3,534.1 L515.7,537.1 L516.0,532.1 L516.3,539.6 L516.7,529.1 L517.0,537.0 L517.3,534.8 L517.7,533.1 L518.0,537.9 L518.3,541.0 L518.7,534.4 L519.0,533.5 L519.3,531.4 L519.7,537.9 L520.0,540.2 L520.3,536.3 L520.7,533.2 L521.0,539.7 L521.3,532.5 L521.7,537.9 L522.0,539.9 L522.3,531.7 L522.7,534.4 L523.0,539.4 L523.3,535.3 L523.7,540.6 L524.0,535.8 L524.3,538.2 L524.7,537.9 L525.0,540.2 L525.3,540.1 L525.7,536.2 L526.0,536.0 L526.3,532.6 L526.7,533.5 L527.0,540.3 L527.3,538.7 L527.7,539.2 L528.0,533.5 L528.3,534.4 L528.7,539.8 L529.0,532.4 L529.3,538.6 L529.7,534.4 L530.0,535.9 L530.3,541.5 L530.7,537.1 L531.0,537.9 L531.3,540.0 L531.7,539.1 L532.0,538.5 L532.3,541.4 L532.7,540.3 L533.0,535.9 L533.3,537.7 L533.7,535.1 L534.0,534.5 L534.3,532.1 L534.7,533.5 L535.0,537.6 L535.3,533.0 L535.7,536.7 L536.0,533.0 L536.3,541.3 L536.7,533.1 L537.0,536.1 L537.3,538.9 L537.7,541.2 L538.0,537.6 L538.3,531.6 L538.7,536.8 L539.0,539.0 L539.3,531.6 L539.7,532.6 L540.0,533.5 L540.3,534.2 L540.7,534.7 L541.0,526.0 L541.3,540.8 L541.7,529.5 L542.0,539.1 L542.3,541.5 L542.7,534.1 L543.0,538.6 L543.3,533.7 L543.7,539.1 L544.0,533.0 L544.3,537.5 L544.7,539.3 L545.0,533.4 L545.3,534.0 L545.7,537.6 L546.0,533.6 L546.3,540.2 L546.7,540.3 L547.0,535.0 L547.3,539.2 L547.7,533.8 L548.0,540.9 L548.3,533.1 L548.7,541.5 L549.0,539.3 L549.3,540.4 L549.7,540.0 L550.0,534.6 L550.3,535.9 L550.7,536.6 L551.0,539.4 L551.3,535.9 L551.7,527.6 L552.0,538.1 L552.3,531.4 L552.7,539.6 L553.0,531.0 L553.3,535.0 L553.7,539.7 L554.0,540.6 L554.3,528.0 L554.7,535.1 L555.0,533.4 L555.3,540.7 L555.7,536.2 L556.0,536.1 L556.3,537.5 L556.7,534.3 L557.0,537.5 L557.3,540.8 L557.7,540.9 L558.0,540.3 L558.3,535.0 L558.7,534.9 L559.0,537.8 L559.3,536.9 L559.7,542.3 L560.0,535.6 L560.3,534.1 L560.7,536.1 L561.0,538.4 L561.3,540.1 L561.7,542.0 L562.0,537.1 L562.3,535.0 L562.7,541.3 L563.0,542.3 L563.3,536.6 L563.7,540.1 L564.0,541.9 L564.3,541.1 L564.7,541.2 L565.0,534.6 L565.3,542.2 L565.7,539.2 L566.0,528.3 L566.3,535.4 L566.7,541.4 L567.0,532.3 L567.3,534.1 L567.7,539.0 L568.0,536.9 L568.3,533.1 L568.7,535.7 L569.0,540.4 L569.3,540.5 L569.7,533.8 L570.0,539.6 L570.3,532.5 L570.7,532.6 L571.0,536.1 L571.3,537.2 L571.7,538.4 L572.0,534.7 L572.3,535.3 L572.7,539.6 L573.0,537.6 L573.3,541.0 L573.7,538.4 L574.0,538.6 L574.3,536.4 L574.7,541.0 L575.0,542.3 L575.3,539.5 L575.7,542.8 L576.0,540.5 L576.3,534.0 L576.7,540.4 L577.0,541.6 L577.3,539.6 L577.7,536.0 L578.0,542.9 L578.3,531.5 L578.7,539.9 L579.0,533.7 L579.3,538.1 L579.7,533.5 L580.0,539.0 L580.3,541.8 L580.7,540.6 L581.0,536.6 L581.3,541.2 L581.7,536.2 L582.0,539.4 L582.3,541.0 L582.7,539.8 L583.0,536.8 L583.3,537.7 L583.7,533.7 L584.0,536.7 L584.3,541.1 L584.7,536.7 L585.0,534.8 L585.3,532.5 L585.7,535.1 L586.0,540.1 L586.3,540.5 L586.7,539.3 L587.0,541.7 L587.3,537.0 L587.7,539.2 L588.0,537.6 L588.3,537.9 L588.7,543.1 L589.0,535.3 L589.3,542.8 L589.7,537.6 L590.0,540.2 L590.3,543.1 L590.7,534.7 L591.0,540.8 L591.3,541.6 L591.7,537.4 L592.0,539.8 L592.3,534.2 L592.7,537.3 L593.0,539.4 L593.3,540.7 L593.7,534.8 L594.0,532.0 L594.3,538.5 L594.7,539.9 L595.0,542.0 L595.3,541.2 L595.7,535.7 L596.0,539.6 L596.3,538.7 L596.7,538.1 L597.0,538.0 L597.3,534.0 L597.7,540.1 L598.0,540.4 L598.3,536.7 L598.7,534.1 L599.0,542.0 L599.3,538.7 L599.7,539.9 L600.0,536.2 L600.3,541.2 L600.7,540.4 L601.0,538.6 L601.3,540.7 L601.7,531.9 L602.0,536.1 L602.3,542.0 L602.7,531.7 L603.0,538.7 L603.3,539.8 L603.7,541.2 L604.0,540.4 L604.3,536.2 L604.7,535.6 L605.0,539.5 L605.3,537.6 L605.7,535.8 L606.0,540.0 L606.3,541.4 L606.7,543.5 L607.0,534.5 L607.3,542.4 L607.7,539.6 L608.0,539.8 L608.3,527.4 L608.7,539.0 L609.0,536.6 L609.3,542.5 L609.7,543.5 L610.0,539.0 L610.3,540.7 L610.7,535.6 L611.0,539.9 L611.3,536.3 L611.7,540.0 L612.0,538.4 L612.3,542.3 L612.7,542.7 L613.0,541.3 L613.3,542.6 L613.7,543.6 L614.0,542.4 L614.3,541.1 L614.7,539.1 L615.0,539.3 L615.3,535.1 L615.7,543.1 L616.0,539.1 L616.3,541.9 L616.7,539.1 L617.0,536.0 L617.3,543.3 L617.7,537.4 L618.0,541.2 L618.3,535.4 L618.7,539.5 L619.0,536.8 L619.3,543.6 L619.7,538.6 L620.0,536.5 L620.3,535.8 L620.7,529.2 L621.0,536.0 L621.3,536.7 L621.7,536.1 L622.0,536.4 L622.3,542.9 L622.7,540.0 L623.0,541.5 L623.3,543.7 L623.7,541.7 L624.0,540.4 L624.3,536.1 L624.7,537.7 L625.0,541.2 L625.3,536.9 L625.7,536.7 L626.0,536.7 L626.3,537.4 L626.7,543.0 L627.0,540.6 L627.3,543.9 L627.7,540.1 L628.0,538.8 L628.3,542.0 L628.7,540.9 L629.0,543.0 L629.3,539.8 L629.7,541.9 L630.0,537.2 L630.3,541.4 L630.7,534.8 L631.0,542.3 L631.3,534.4 L631.7,537.9 L632.0,537.8 L632.3,538.1 L632.7,535.7 L633.0,539.2 L633.3,543.0 L633.7,537.4 L634.0,537.6 L634.3,540.4 L634.7,538.3 L635.0,533.1 L635.3,539.8 L635.7,538.3 L636.0,542.6 L636.3,534.4 L636.7,541.1 L637.0,534.5 L637.3,535.7 L637.7,534.5 L638.0,541.9 L638.3,537.8 L638.7,536.1 L639.0,539.2 L639.3,543.5 L639.7,537.2 L640.0,536.3 L640.3,539.0 L640.7,542.3 L641.0,532.4 L641.3,536.5 L641.7,541.8 L642.0,535.9 L642.3,538.9 L642.7,536.4 L643.0,538.8 L643.3,540.9 L643.7,533.2 L644.0,540.4 L644.3,538.2 L644.7,543.5 L645.0,542.2 L645.3,535.7 L645.7,542.3 L646.0,536.1 L646.3,541.2 L646.7,541.5 L647.0,537.5 L647.3,543.0 L647.7,539.7 L648.0,543.2 L648.3,538.3 L648.7,542.4 L649.0,537.5 L649.3,540.8 L649.7,540.3 L650.0,538.1 L650.3,536.3 L650.7,539.9 L651.0,535.1 L651.3,537.5 L651.7,538.7 L652.0,535.8 L652.3,536.0 L652.7,539.9 L653.0,540.6 L653.3,538.5 L653.7,543.7 L654.0,541.6 L654.3,535.0 L654.7,537.6 L655.0,542.0 L655.3,543.1 L655.7,541.9 L656.0,541.0 L656.3,536.1 L656.7,531.1 L657.0,543.5 L657.3,540.7 L657.7,537.9 L658.0,535.6 L658.3,544.2 L658.7,539.8 L659.0,539.9 L659.3,537.9 L659.7,535.0 L660.0,534.7 L660.3,536.3 L660.7,537.6 L661.0,543.8 L661.3,540.5 L661.7,542.3 L662.0,542.4 L662.3,543.0 L662.7,534.5 L663.0,538.1 L663.3,537.2 L663.7,536.5 L664.0,532.0 L664.3,544.3 L664.7,535.3 L665.0,544.2 L665.3,539.2 L665.7,543.4 L666.0,541.5 L666.3,543.3 L666.7,538.0 L667.0,541.6 L667.3,542.1 L667.7,544.0 L668.0,540.1 L668.3,540.0 L668.7,543.5 L669.0,543.0 L669.3,539.4 L669.7,538.5 L670.0,535.1 L670.3,544.4 L670.7,536.5 L671.0,537.6 L671.3,537.0 L671.7,541.6 L672.0,538.3 L672.3,544.1 L672.7,543.8 L673.0,543.5 L673.3,541.3 L673.7,538.2 L674.0,535.3 L674.3,539.7 L674.7,540.7 L675.0,537.4 L675.3,541.0 L675.7,539.9 L676.0,540.4 L676.3,544.1 L676.7,544.0 L677.0,539.2 L677.3,538.2 L677.7,541.5 L678.0,542.4 L678.3,535.4 L678.7,529.4 L679.0,535.2 L679.3,538.8 L679.7,541.7 L680.0,538.9 L680.3,539.8 L680.7,535.0 L681.0,542.2 L681.3,536.9 L681.7,536.2 L682.0,541.8 L682.3,543.8 L682.7,536.5 L683.0,541.5 L683.3,537.0 L683.7,544.1 L684.0,544.2 L684.3,539.3 L684.7,530.2 L685.0,537.3 L685.3,544.6 L685.7,540.6 L686.0,535.1 L686.3,543.9 L686.7,540.4 L687.0,541.0 L687.3,536.6 L687.7,535.1 L688.0,536.6 L688.3,536.9 L688.7,541.7 L689.0,539.2 L689.3,542.6 L689.7,539.5 L690.0,543.5 L690.3,535.5 L690.7,541.0 L691.0,535.7 L691.3,538.0 L691.7,530.3 L692.0,543.1 L692.3,542.7 L692.7,543.1 L693.0,539.0 L693.3,540.9 L693.7,536.5 L694.0,539.0 L694.3,535.2 L694.7,537.9 L695.0,542.2 L695.3,539.1 L695.7,544.1 L696.0,541.1 L696.3,540.5 L696.7,539.3 L697.0,535.9 L697.3,540.0 L697.7,533.7 L698.0,530.0 L698.3,539.2 L698.7,541.5 L699.0,535.5 L699.3,529.8 L699.7,542.6 L700.0,539.6 L700.3,543.6 L700.7,539.1 L701.0,535.8 L701.3,541.2 L701.7,537.8 L702.0,536.4 L702.3,542.2 L702.7,544.6 L703.0,542.3 L703.3,542.3 L703.7,540.1 L704.0,542.0 L704.3,539.8 L704.7,543.3 L705.0,536.5 L705.3,539.5 L705.7,539.6 L706.0,535.9 L706.3,534.1 L706.7,541.3 L707.0,542.6 L707.3,541.2 L707.7,535.6 L708.0,539.3 L708.3,542.6 L708.7,543.8 L709.0,530.5 L709.3,543.9 L709.7,543.7 L710.0,541.8 L710.3,544.3 L710.7,538.6 L711.0,535.3 L711.3,536.5 L711.7,534.5 L712.0,543.1 L712.3,541.4 L712.7,542.9 L713.0,540.8 L713.3,544.1 L713.7,539.4 L714.0,539.4 L714.3,542.0 L714.7,538.0 L715.0,535.4 L715.3,535.9 L715.7,530.7 L716.0,539.1 L716.3,538.9 L716.7,530.5 L717.0,533.2 L717.3,536.4 L717.7,537.2 L718.0,538.2 L718.3,539.2 L718.7,535.0 L719.0,537.2 L719.3,536.8 L719.7,541.6 L720.0,544.8 L720.3,542.4 L720.7,539.8 L721.0,538.3 L721.3,542.6 L721.7,543.2 L722.0,542.5 L722.3,537.3 L722.7,542.6 L723.0,542.4 L723.3,542.4 L723.7,543.1 L724.0,542.0 L724.3,537.9 L724.7,537.2 L725.0,544.2 L725.3,542.6 L725.7,540.9 L726.0,541.3 L726.3,536.1 L726.7,541.2 L727.0,537.3 L727.3,541.7 L727.7,541.3 L728.0,539.2 L728.3,540.3 L728.7,544.8 L729.0,533.2 L729.3,543.6 L729.7,536.4 L730.0,535.9 L730.3,535.9 L730.7,538.0 L731.0,543.1 L731.3,538.4 L731.7,537.9 L732.0,540.6 L732.3,543.8 L732.7,532.9 L733.0,537.9 L733.3,543.2 L733.7,539.9 L734.0,539.5 L734.3,539.9 L734.7,544.2 L735.0,544.3 L735.3,537.6 L735.7,540.1 L736.0,541.8 L736.3,542.1 L736.7,535.5 L737.0,539.1 L737.3,540.5 L737.7,535.8 L738.0,544.8 L738.3,538.4 L738.7,543.3 L739.0,539.8 L739.3,537.2 L739.7,538.7 L740.0,539.5 L740.3,544.6 L740.7,539.0 L741.0,540.4 L741.3,541.9 L741.7,536.4 L742.0,541.0 L742.3,540.5 L742.7,536.1 L743.0,535.9 L743.3,536.4 L743.7,540.1 L744.0,542.2 L744.3,538.0 L744.7,539.4 L745.0,535.8 L745.3,544.1 L745.7,541.7 L746.0,540.2 L746.3,540.0 L746.7,545.0 L747.0,542.4 L747.3,538.9 L747.7,544.2 L748.0,540.4 L748.3,535.6 L748.7,533.5 L749.0,542.8 L749.3,537.3 L749.7,536.3 L750.0,540.9 L750.3,535.8 L750.7,540.4 L751.0,536.9 L751.3,541.7 L751.7,543.0 L752.0,537.2 L752.3,536.1 L752.7,537.3 L753.0,537.2 L753.3,543.4 L753.7,542.1 L754.0,530.9 L754.3,541.7 L754.7,539.1 L755.0,536.0 L755.3,544.5 L755.7,544.0 L756.0,536.6 L756.3,543.3 L756.7,537.7 L757.0,539.0 L757.3,530.3 L757.7,537.6 L758.0,536.6 L758.3,535.9 L758.7,540.3 L759.0,539.0 L759.3,537.4 L759.7,538.7 L760.0,538.3 L760.3,542.0 L760.7,543.3 L761.0,538.4 L761.3,541.9 L761.7,536.2 L762.0,535.8 L762.3,535.7 L762.7,541.9 L763.0,540.0 L763.3,544.8 L763.7,539.9 L764.0,537.9 L764.3,543.2 L764.7,542.8 L765.0,540.4 L765.3,540.0 L765.7,538.9 L766.0,541.2 L766.3,540.5 L766.7,544.0 L767.0,538.5 L767.3,539.7 L767.7,536.0 L768.0,542.7 L768.3,535.4 L768.7,543.3 L769.0,544.6 L769.3,539.8 L769.7,538.1 L770.0,542.0 L770,562 Z" fill="#aff8f8"/><rect x="386.5" y="406" width="30" height="164" fill="rgba(0,0,0,0.06)"/></svg>
</body></html>
